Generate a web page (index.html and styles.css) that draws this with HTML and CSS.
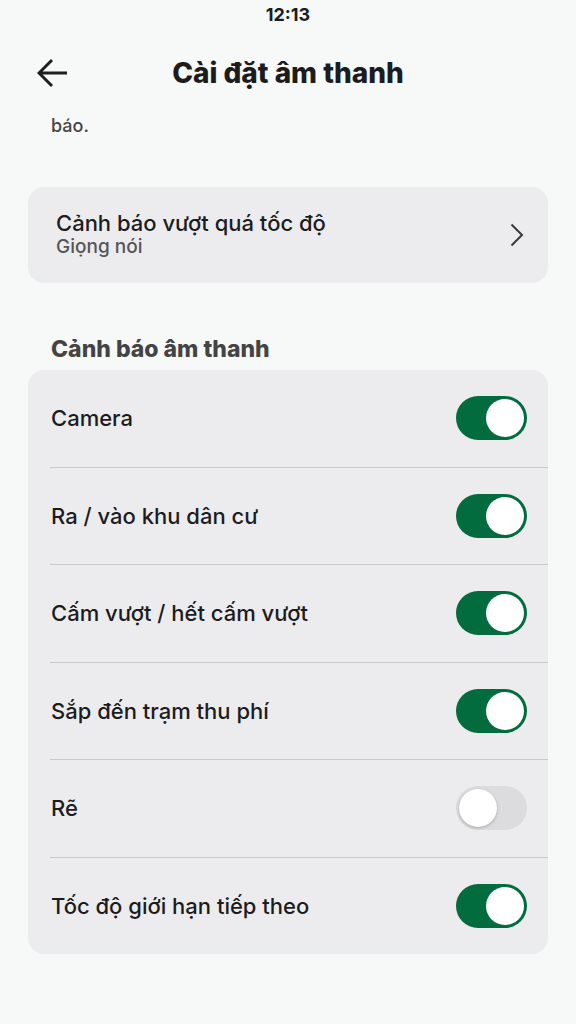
FILE: index.html
```html
<!DOCTYPE html>
<html lang="vi">
  <head>
    <meta charset="UTF-8">
    <title>Cài đặt âm thanh</title>
    <link rel="stylesheet" href="styles.css">
  </head>
  <body>
    <div class="status">12:13</div>
    <div class="header">
      <svg class="back" width="32" height="32" viewBox="0 0 32 32">
        <path d="M30 16H3M15 3L2 16l13 13" fill="none" stroke="#1f1f21" stroke-width="3"/>
      </svg>
      <h1>Cài đặt âm thanh</h1>
    </div>
    <div class="page">
      <div class="note">báo.</div>

      <div class="card link">
        <div>
          <div class="link-title">Cảnh báo vượt quá tốc độ</div>
          <div class="link-sub">Giọng nói</div>
        </div>
        <svg width="14" height="24" viewBox="0 0 14 24">
          <path d="M1.5 1.5l10.5 10.5-10.5 10.5" fill="none" stroke="#3a3a3c" stroke-width="2"/>
        </svg>
      </div>

      <h2>Cảnh báo âm thanh</h2>
      <div class="card list">
        <div class="row"><span>Camera</span><span class="switch on"></span></div>
        <div class="row"><span>Ra / vào khu dân cư</span><span class="switch on"></span></div>
        <div class="row"><span>Cấm vượt / hết cấm vượt</span><span class="switch on"></span></div>
        <div class="row"><span>Sắp đến trạm thu phí</span><span class="switch on"></span></div>
        <div class="row"><span>Rẽ</span><span class="switch"></span></div>
        <div class="row"><span>Tốc độ giới hạn tiếp theo</span><span class="switch on"></span></div>
      </div>
    </div>
  </body>
</html>
```

FILE: styles.css
```css
body {
  margin: 0;
  background: #f7f8f8;
  font-family: Inter, "Noto Sans", sans-serif;
  color: #1c1c1e;
}
.status {
  height: 30px;
  line-height: 30px;
  text-align: center;
  font-size: 18px;
  font-weight: 700;
}
.header {
  height: 85px;
  display: flex;
  align-items: center;
  justify-content: center;
  position: relative;
}
.back {
  position: absolute;
  left: 37px;
  top: 27px;
}
h1 {
  margin: 0;
  font-size: 28px;
  font-weight: 800;
}
.page {
  padding: 0 28px;
}
.note {
  padding-left: 23px;
  font-size: 18px;
  line-height: 22px;
  font-weight: 500;
  color: #444;
}
.card {
  background: #ececee;
  border-radius: 16px;
}
.link {
  margin-top: 50px;
  height: 96px;
  box-sizing: border-box;
  padding: 0 24px 0 28px;
  display: flex;
  align-items: center;
  justify-content: space-between;
}
.link-title {
  font-size: 22px;
  line-height: 24px;
  font-weight: 500;
}
.link-sub {
  font-size: 19px;
  line-height: 24px;
  font-weight: 500;
  color: #555;
}
h2 {
  margin: 54px 0 9px;
  padding-left: 23px;
  font-size: 23px;
  line-height: 24px;
  font-weight: 800;
  color: #444;
}
.row {
  height: 96.5px;
  margin-left: 22px;
  padding: 0 21px 0 1px;
  display: flex;
  align-items: center;
  justify-content: space-between;
  font-size: 22px;
  font-weight: 500;
  border-bottom: 1px solid #c9c9cc;
}
.row:last-child {
  border-bottom: none;
}
.switch {
  width: 71px;
  height: 44px;
  border-radius: 22px;
  background: #dcdcdf;
  position: relative;
}
.switch:after {
  content: "";
  position: absolute;
  top: 3px;
  left: 3px;
  width: 38px;
  height: 38px;
  border-radius: 50%;
  background: #fff;
  box-shadow: 0 1px 3px rgba(0,0,0,0.25);
}
.switch.on {
  background: #026c3f;
}
.switch.on:after {
  left: 30px;
  box-shadow: none;
}
```
